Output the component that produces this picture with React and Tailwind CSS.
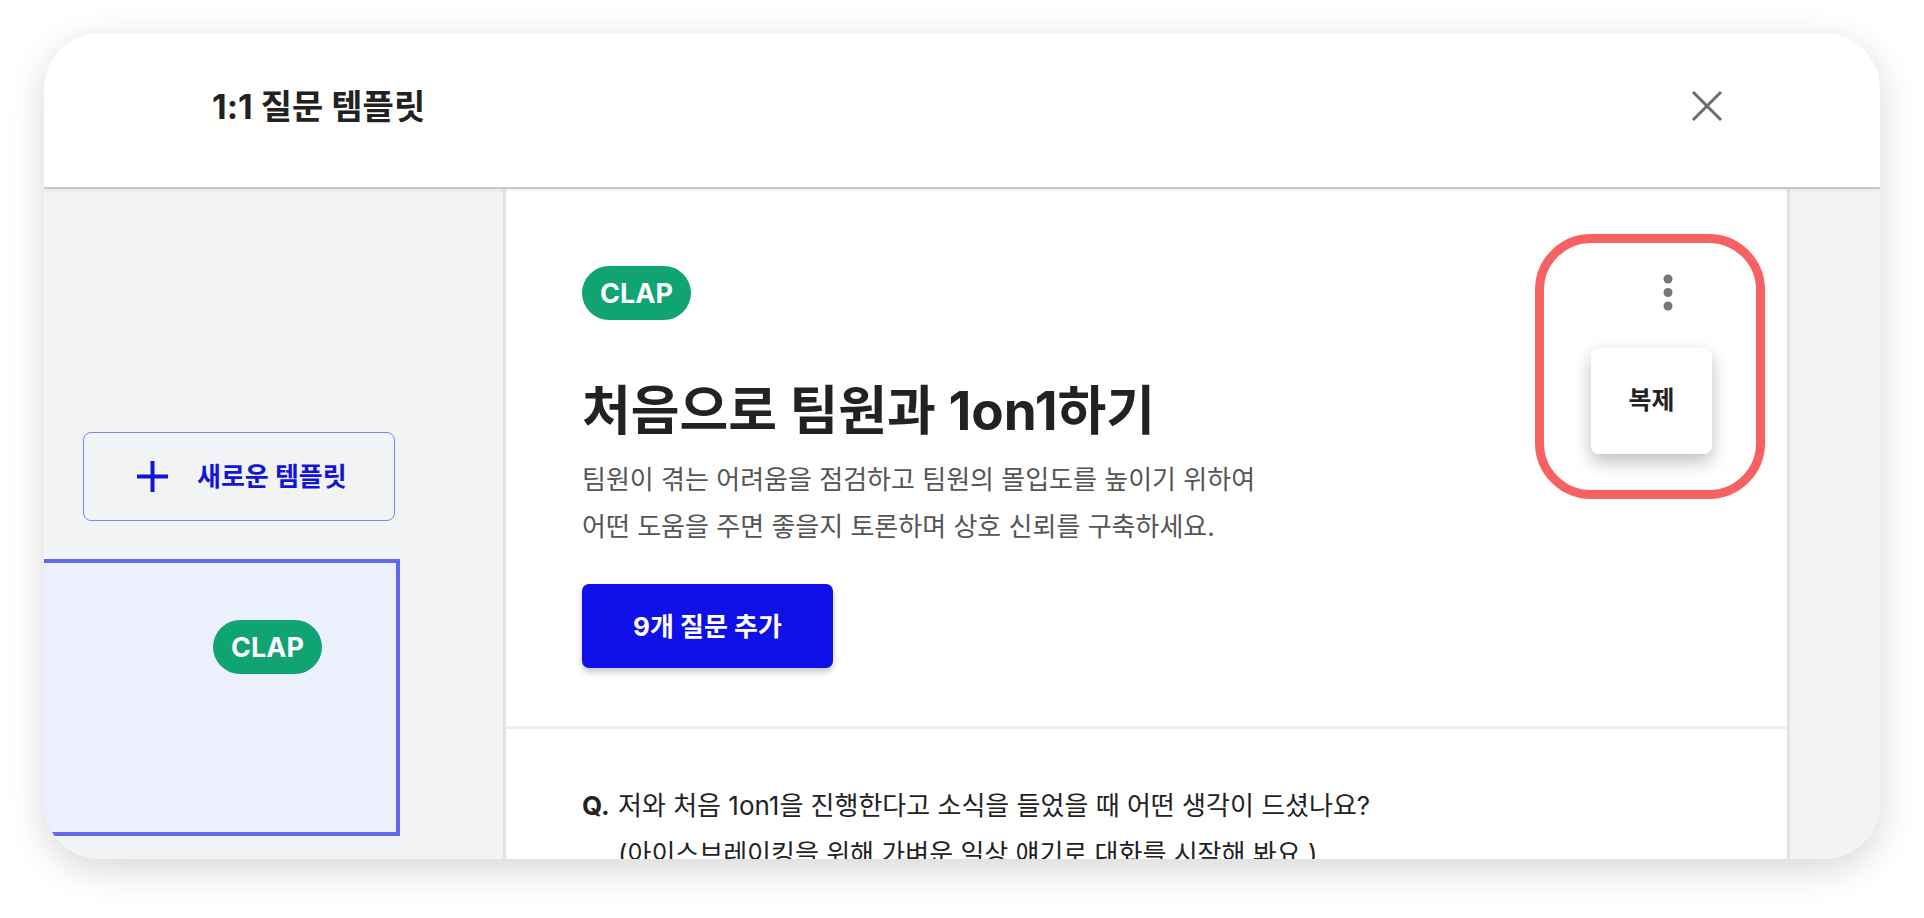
import React from "react";

const font = "font-['Inter','Noto_Sans_CJK_KR',sans-serif]";

function CloseIcon() {
  return (
    <svg width="32" height="32" viewBox="0 0 32 32" fill="none">
      <path d="M2 2 L30 30 M30 2 L2 30" stroke="#6b6b6b" strokeWidth="3" />
    </svg>
  );
}

function PlusIcon() {
  return (
    <svg width="33" height="33" viewBox="0 0 33 33" fill="none">
      <path d="M16.5 1 V32 M1 16.5 H32" stroke="#1414d6" strokeWidth="4" />
    </svg>
  );
}

function KebabIcon() {
  return (
    <svg width="10" height="38" viewBox="0 0 10 38" fill="#777777">
      <circle cx="5" cy="5" r="4.5" />
      <circle cx="5" cy="18.5" r="4.5" />
      <circle cx="5" cy="32" r="4.5" />
    </svg>
  );
}

function Badge() {
  return (
    <div className="w-[109px] h-[54px] rounded-full bg-[#10a473] flex items-center justify-center text-white text-[27px] font-bold leading-none">
      CLAP
    </div>
  );
}

export default function App() {
  return (
    <div className={`w-[1924px] h-[918px] bg-white pt-[33px] pl-[44px] overflow-hidden ${font}`}>
      <div className="w-[1836px] h-[826px] rounded-[56px] overflow-hidden bg-white flex flex-col shadow-[0_10px_36px_rgba(0,0,0,0.16)]">
        {/* header */}
        <div className="h-[156px] shrink-0 flex items-center justify-between pl-[168px] pr-[157px] pb-[8px] border-b-2 border-[#c9c9c9] relative z-10 shadow-[0_2px_4px_rgba(0,0,0,0.06)]">
          <h1 className="text-[34px] font-bold text-[#222]">1:1 질문 템플릿</h1>
          <CloseIcon />
        </div>

        {/* body */}
        <div className="flex-1 flex min-h-0">
          {/* sidebar */}
          <div className="w-[462px] shrink-0 bg-[#f1f3f5] border-r-[3px] border-[#e1e3e6] pt-[243px]">
            <button className="ml-[39px] w-[312px] h-[89px] rounded-[8px] border border-[#8085e8] flex items-center pl-[52px] gap-[28px] text-[#1414d6]">
              <PlusIcon />
              <span className="text-[26px] font-bold">새로운 템플릿</span>
            </button>
            <div className="-ml-[4px] mt-[38px] w-[360px] h-[277px] border-4 border-[#6468ef] bg-[#ebf0fc] pl-[169px] pt-[57px]">
              <Badge />
            </div>
          </div>

          {/* main */}
          <div className="flex-1 border-r-[3px] border-[#e1e3e6] bg-white relative">
            <div className="pl-[76px] pt-[77px] pb-[58px] border-b-[3px] border-[#ececec]">
              <Badge />
              <h2 className="mt-[60px] text-[53px] leading-[62px] font-bold text-[#222]">
                처음으로 팀원과 1on1하기
              </h2>
              <p className="mt-[14px] text-[26px] leading-[47px] text-[#555]">
                팀원이 겪는 어려움을 점검하고 팀원의 몰입도를 높이기 위하여
                <br />
                어떤 도움을 주면 좋을지 토론하며 상호 신뢰를 구축하세요.
              </p>
              <button className="mt-[34px] w-[251px] h-[84px] rounded-[7px] bg-[#0f0fe8] text-white text-[26px] font-bold shadow-[0_4px_6px_rgba(0,0,0,0.22)]">
                9개 질문 추가
              </button>
            </div>
            <div className="pl-[76px] pt-[53px] flex text-[26px] leading-[48px] text-[#222]">
              <span className="font-bold w-[36px] shrink-0">Q.</span>
              <div>
                <div>저와 처음 1on1을 진행한다고 소식을 들었을 때 어떤 생각이 드셨나요?</div>
                <div>(아이스브레이킹을 위해 가벼운 일상 얘기로 대화를 시작해 봐요.)</div>
              </div>
            </div>

            {/* kebab + dropdown */}
            <div className="absolute left-[1157px] top-[85px]">
              <KebabIcon />
            </div>
            <div className="absolute left-[1085px] top-[159px] w-[121px] h-[106px] rounded-[8px] bg-white flex items-center justify-center text-[25px] font-bold text-[#222] shadow-[0_8px_18px_rgba(0,0,0,0.25)]">
              복제
            </div>

            {/* highlight annotation */}
            <div className="absolute left-[1029px] top-[45px] w-[230px] h-[265px] rounded-[56px] border-[9px] border-[#f86161]" />
          </div>

          {/* right strip */}
          <div className="w-[90px] shrink-0 bg-[#f1f3f5]" />
        </div>
      </div>
    </div>
  );
}
